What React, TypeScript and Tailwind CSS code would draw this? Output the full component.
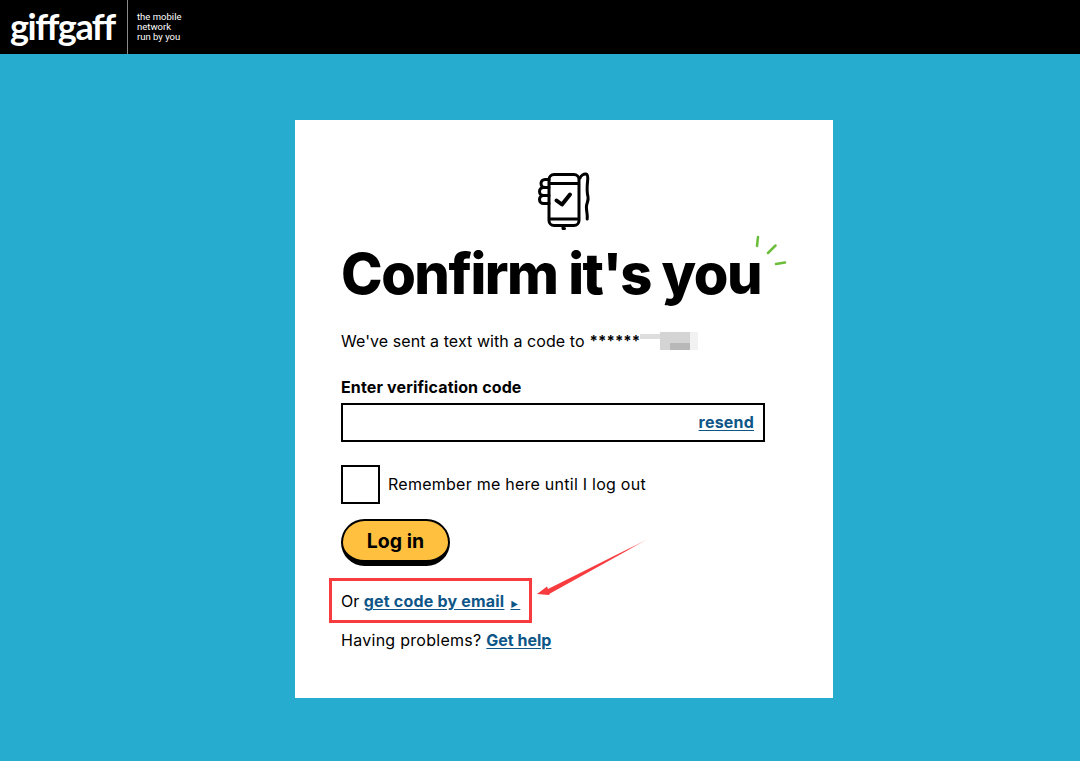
const PhoneIcon = () => {
  return (
    <svg width="60" height="64" viewBox="15 8 60 64" fill="none" stroke="#000" strokeWidth="3" strokeLinecap="round" strokeLinejoin="round">
      <rect x="30" y="14.5" width="30" height="51" rx="5" />
      <path d="M31 23.500h28M31 59h28" />
      <path d="M30 19.500h-4a4 4 0 0 0 0 8h4" />
      <path d="M26 27.500h-1.500a4 4 0 0 0 0 8H30" />
      <path d="M24.500 35.500a4 4 0 0 0 0 8H30" />
      <path d="M44 66v2.500h1.500" />
      <path d="M61 18c1-2.500 4-4.500 6-4 2 .5 2 3 1.600 7-.7 6-.8 11 .4 16 .8 4-1.600 6-1.600 10 0 5 1.400 8 .8 12" />
      <path d="M37.500 40.500l5.500 4 8-10" strokeWidth="4" />
    </svg>
  );
};

const Sparkle = () => {
  return (
    <svg className="absolute left-[412px] top-[-3px]" width="34" height="32" viewBox="0 0 34 32" fill="none" stroke="#6dbd3c" strokeWidth="2.500" strokeLinecap="round">
      <path d="M5 2l-1 9M22.500 10.500L15 18M32 27.500l-9 1.500" />
    </svg>
  );
};

const Arrow = () => {
  return (
    <svg className="absolute left-[191px] top-[-53px]" width="120" height="64" viewBox="0 0 120 64" fill="none">
      <defs>
        <linearGradient id="fade" x1="5" y1="57" x2="116" y2="2" gradientUnits="userSpaceOnUse">
          <stop offset="0.8" stopColor="#f73b3f" />
          <stop offset="1" stopColor="#f73b3f" stopOpacity="0.25" />
        </linearGradient>
      </defs>
      <path d="M5 57l10-7.500 1 2.500L117 1.500 18 56.500l-1 1.500z" fill="url(#fade)" />
    </svg>
  );
};

const linkClass = "font-bold text-[#0f5688] underline underline-offset-2";

export default function App() {
  return (
    <div className="min-h-[761px] bg-[#25acce] font-['Inter',sans-serif] text-black">
      <header className="flex h-[54px] items-stretch bg-black text-white">
        <div className="flex w-[127px] items-center pb-[2px] pl-[10px] font-['Lato',sans-serif] text-[36px] leading-none font-bold tracking-[-1.500px]">
          giffgaff
        </div>
        <div className="w-px bg-[#8a8a8a]"></div>
        <div className="flex flex-col justify-center pl-[9px] font-['Roboto',sans-serif] text-[9.500px] leading-[10px]">
          <span>the mobile</span>
          <span>network</span>
          <span>run by you</span>
        </div>
      </header>

      <main className="flex justify-center pt-[66px] pl-[48px]">
        <div className="flex h-[578px] w-[538px] flex-col bg-white pt-[48px]">
          <div className="flex justify-center">
            <PhoneIcon />
          </div>

          <div className="pr-[68px] pl-[46px]">
            <div className="relative mt-[6px] h-[72px]">
              <h1 className="text-[56px] leading-[72px] font-extrabold tracking-[-1.500px] whitespace-nowrap">
                Confirm it's you
              </h1>
              <Sparkle />
            </div>

            <div className="mt-[20px] flex h-[24px] items-center pb-[2px] text-[16px] tracking-[0.07px]">
              <span>We've sent a text with a code to</span>
              <span className="ml-[5px] text-[15px] font-bold">******</span>
              <span className="relative flex h-[18px] w-[58px] blur-[0.6px]">
                <span className="mt-[2px] h-[5px] w-[20px] bg-[#dedede]"></span>
                <span className="h-[18px] w-[30px] bg-[#d4d4d4]"></span>
                <span className="h-[18px] w-[8px] bg-[#f2f2f2]"></span>
                <span className="absolute top-[11px] left-[30px] h-[7px] w-[20px] bg-[#b8b8b8]"></span>
              </span>
            </div>

            <label className="mt-[21px] block text-[16px] leading-[24px] font-bold tracking-[0.14px]">
              Enter verification code
            </label>
            <div className="mt-[4px] flex h-[39px] items-center justify-end border-2 border-black pr-[9px] pb-[2px]">
              <a className={`${linkClass} text-[16px] tracking-[0.2px]`}>resend</a>
            </div>

            <div className="mt-[23px] flex items-center gap-[8px]">
              <div className="size-[39px] border-2 border-black"></div>
              <span className="pb-[2px] text-[16px] tracking-[0.25px]">Remember me here until I log out</span>
            </div>

            <button className="mt-[15px] flex h-[47px] w-[109px] items-center justify-center rounded-full border-2 border-b-[6px] border-black bg-[#ffc040] pt-[2px] text-[19.500px] font-bold">
              Log in
            </button>

            <div className="relative mt-[24px] flex h-[24px] items-center pb-[2px] text-[16px] whitespace-nowrap">
              <div className="absolute top-[-12px] left-[-12px] h-[45px] w-[203px] border-[3px] border-[#f73b3f]"></div>
              <Arrow />
              <span>Or&nbsp;</span>
              <a className={`${linkClass} tracking-[0.2px]`}>
                get code by email
                <span className="pl-[6px] text-[8px]">&#9658;&nbsp;</span>
              </a>
            </div>

            <div className="mt-[15px] flex h-[24px] items-center pb-[2px] text-[16px] whitespace-nowrap">
              <span className="tracking-[0.28px]">Having problems?&nbsp;</span>
              <a className={linkClass}>Get help</a>
            </div>
          </div>
        </div>
      </main>
    </div>
  );
}
